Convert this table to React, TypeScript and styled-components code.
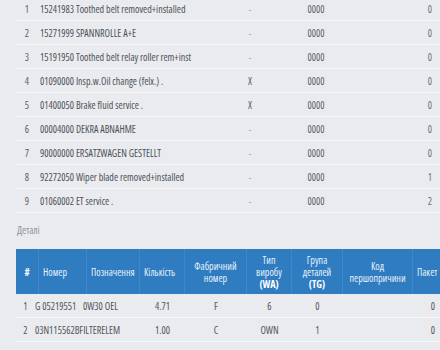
import React from "react";
import styled, { createGlobalStyle } from "styled-components";

const Global = createGlobalStyle`
  html, body { margin: 0; padding: 0; background: #e9ebef; }
  body { font-family: "Open Sans", "Noto Sans", sans-serif; font-stretch: 75%; overflow: hidden; }
`;

const Page = styled.div`
  width: 440px;
  height: 350px;
  overflow: hidden;
  padding-left: 16px;
  box-sizing: border-box;
  background: #e9ebef;
`;

const Scroll = styled.div`
  margin-top: -3px;
  display: flex;
  flex-direction: column;
`;

const OpRow = styled.div`
  display: grid;
  grid-template-columns: 22px 182px 60px 72px 88px;
  height: 24px;
  align-items: center;
  border-bottom: 1px solid #f6f7f9;
  box-sizing: border-box;
  font-size: 10px;
  color: #555a60;
`;

const Num = styled.div`
  text-align: center;
  color: #5b6066;
`;

const Desc = styled.div`
  padding-left: 2px;
  white-space: nowrap;
  color: #4d5258;
`;

const Center = styled.div<{ $muted?: boolean }>`
  text-align: center;
  color: ${(p) => (p.$muted ? "#a3a7ad" : "#5b6066")};
`;

const Right = styled.div`
  text-align: right;
  padding-right: 8px;
  color: #6a6f75;
`;

const Section = styled.div`
  font-size: 10px;
  color: #8e9297;
  padding: 10px 0 0 1px;
  height: 36px;
  box-sizing: border-box;
`;

const cols = "23px 48px 53px 45px 62px 45px 51px 70px 40px";

const Head = styled.div`
  display: grid;
  grid-template-columns: ${cols};
  height: 45px;
  background: #2f7cc1;
  color: #e6f0fa;
  font-size: 10px;
  width: 437px;
`;

const HCell = styled.div<{ $left?: boolean }>`
  display: flex;
  flex-direction: column;
  align-items: ${(p) => (p.$left ? "flex-start" : "center")};
  justify-content: center;
  text-align: center;
  line-height: 12px;
  padding-left: ${(p) => (p.$left ? "4px" : "0")};
  border-right: 1px solid #3d88cb;
  white-space: nowrap;
  overflow: hidden;
  & b { font-weight: bold; color: #ffffff; }
`;

const PartRow = styled.div`
  display: grid;
  grid-template-columns: ${cols};
  height: 24px;
  align-items: center;
  border-bottom: 1px solid #f6f7f9;
  box-sizing: border-box;
  font-size: 10px;
  color: #50555b;
  width: 437px;
`;

const PCell = styled.div`
  text-align: center;
  white-space: nowrap;
`;

const PNum = styled.div`
  text-align: center;
  margin-right: 4px;
`;

const PText = styled.div`
  white-space: nowrap;
  margin-left: -4px;
`;

const ops = [
  ["1", "15241983 Toothed belt removed+installed", "-", "0000", "0"],
  ["2", "15271999 SPANNROLLE A+E", "-", "0000", "0"],
  ["3", "15191950 Toothed belt relay roller rem+inst", "-", "0000", "0"],
  ["4", "01090000 Insp.w.Oil change (felx.) .", "X", "0000", "0"],
  ["5", "01400050 Brake fluid service .", "X", "0000", "0"],
  ["6", "00004000 DEKRA ABNAHME", "-", "0000", "0"],
  ["7", "90000000 ERSATZWAGEN GESTELLT", "-", "0000", "0"],
  ["8", "92272050 Wiper blade removed+installed", "-", "0000", "1"],
  ["9", "01060002 ET service .", "-", "0000", "2"],
];

const parts = [
  ["1", "G 05219551", "0W30 OEL", "4.71", "F", "6", "0", "", "0"],
  ["2", "03N115562BFILTERELEM", "", "1.00", "C", "OWN", "1", "", "0"],
  ["3", "", "", "", "", "", "", "", ""],
];

export default function App() {
  return (
    <Page>
      <Global />
      <Scroll>
        {ops.map((r) => (
          <OpRow key={r[0]}>
            <Num>{r[0]}</Num>
            <Desc>{r[1]}</Desc>
            <Center $muted={r[2] === "-"}>{r[2]}</Center>
            <Center>{r[3]}</Center>
            <Right>{r[4]}</Right>
          </OpRow>
        ))}
        <Section>Деталі</Section>
        <Head>
          <HCell><b>#</b></HCell>
          <HCell $left>Номер</HCell>
          <HCell $left>Позначення</HCell>
          <HCell $left>Кількість</HCell>
          <HCell>
            <span>Фабричний</span>
            <span>номер</span>
          </HCell>
          <HCell>
            <span>Тип</span>
            <span>виробу</span>
            <b>(WA)</b>
          </HCell>
          <HCell>
            <span>Група</span>
            <span>деталей</span>
            <b>(TG)</b>
          </HCell>
          <HCell>
            <span>Код</span>
            <span>першопричини</span>
          </HCell>
          <HCell $left>Пакет</HCell>
        </Head>
        {parts.map((r) => (
          <PartRow key={r[0]}>
            <PNum>{r[0]}</PNum>
            <PText>{r[1]}</PText>
            <PText>{r[2]}</PText>
            <PCell>{r[3]}</PCell>
            <PCell>{r[4]}</PCell>
            <PCell>{r[5]}</PCell>
            <PCell>{r[6]}</PCell>
            <PCell>{r[7]}</PCell>
            <PCell>{r[8]}</PCell>
          </PartRow>
        ))}
      </Scroll>
    </Page>
  );
}
